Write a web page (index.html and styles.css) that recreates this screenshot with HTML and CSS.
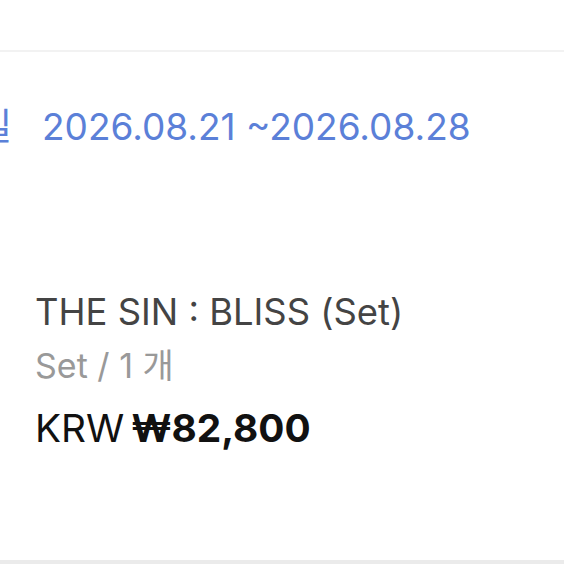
FILE: index.html
```html
<!DOCTYPE html>
<html lang="ko">

<head>
  <meta charset="UTF-8">
  <link rel="stylesheet" href="styles.css">
</head>

<body>
  <div class="page">
    <div class="top-bar"></div>
    <!-- 판매 기간 -->
    <div class="period">
      <span class="period-label">일</span>
      <span class="period-value">2026.08.21 ~2026.08.28</span>
    </div>
    <!-- 상품 정보 -->
    <div class="item">
      <div class="item-name">THE SIN : BLISS (Set)</div>
      <div class="item-option">Set / 1 개</div>
      <div class="item-price">KRW <b>₩82,800</b></div>
    </div>
    <div class="bottom-bar"></div>
  </div>
</body>

</html>
```

FILE: styles.css
```css
body {
  margin: 0;
  background: #fff;
  font-family: Inter, "Noto Sans CJK KR", sans-serif;
}

.page {
  height: 564px;
  display: flex;
  flex-direction: column;
  overflow: hidden;
}

.top-bar {
  height: 50px;
  border-bottom: 2px solid #f2f2f2;
}

.period {
  display: flex;
  align-items: baseline;
  margin-top: 45px;
  white-space: nowrap;
  font-size: 37px;
  color: #5b80d8;
}

.period-label {
  width: 12px;
  direction: rtl;
  overflow: hidden;
  margin-right: 30px;
}

.item {
  margin-top: 134px;
  padding-left: 35px;
  flex: 1;
}

.item-name {
  font-size: 36.4px;
  color: #444;
  line-height: 54px;
}

.item-option {
  font-size: 34px;
  color: #999;
  line-height: 54px;
}

.item-price {
  font-size: 38.8px;
  color: #111;
  line-height: 70px;
  word-spacing: -4px;
}

.item-price b {
  font-weight: 700;
}

.bottom-bar {
  height: 4px;
  background: #ebebeb;
}
```
